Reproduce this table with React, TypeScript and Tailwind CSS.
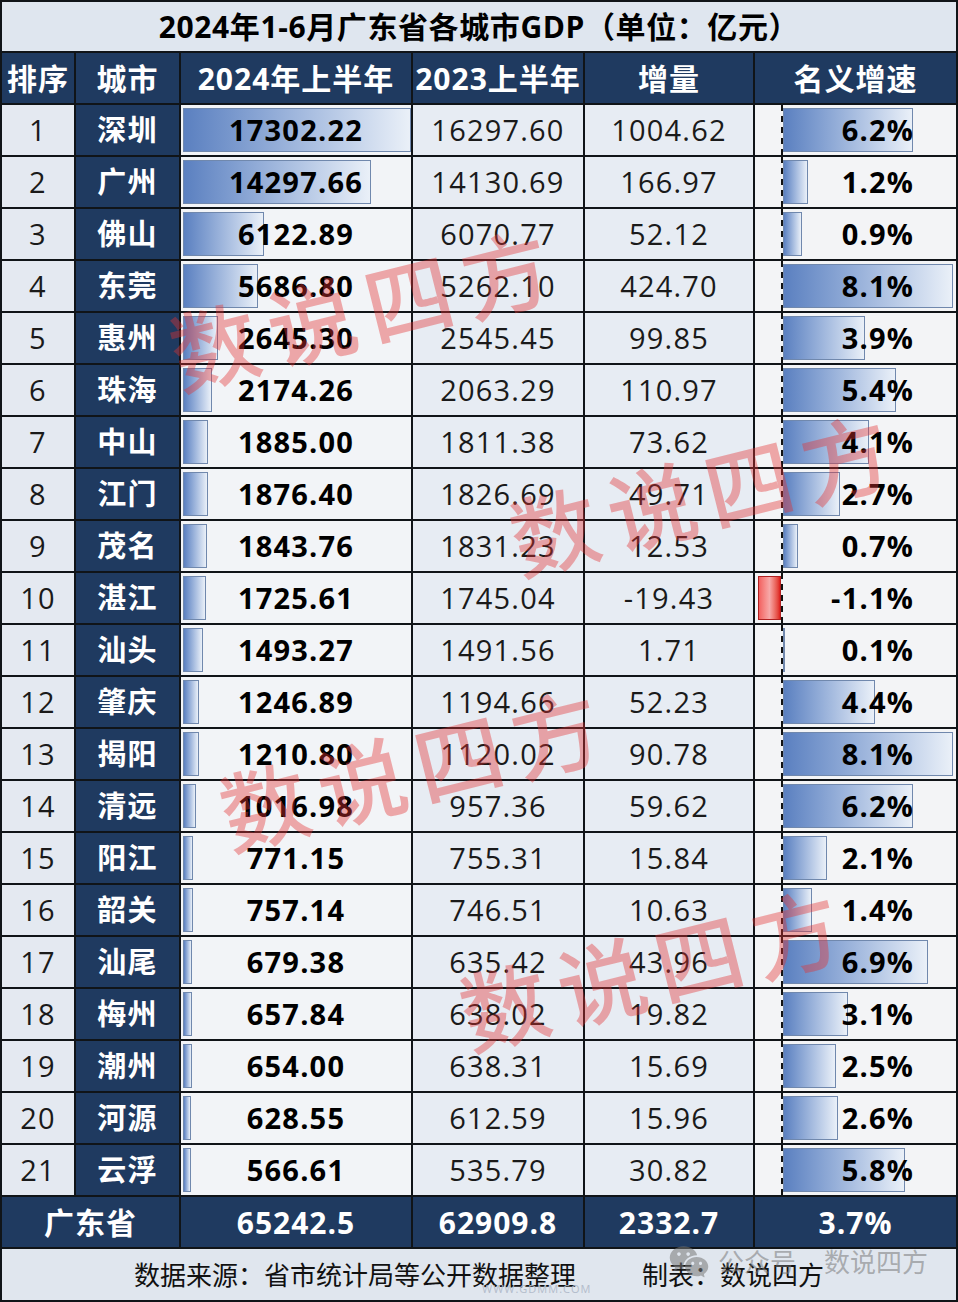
import React from "react";
import { RiWechatFill } from "react-icons/ri";

type Row = [number, string, string, string, string, number];

const data: Row[] = [
  [1, "深圳", "17302.22", "16297.60", "1004.62", 6.2],
  [2, "广州", "14297.66", "14130.69", "166.97", 1.2],
  [3, "佛山", "6122.89", "6070.77", "52.12", 0.9],
  [4, "东莞", "5686.80", "5262.10", "424.70", 8.1],
  [5, "惠州", "2645.30", "2545.45", "99.85", 3.9],
  [6, "珠海", "2174.26", "2063.29", "110.97", 5.4],
  [7, "中山", "1885.00", "1811.38", "73.62", 4.1],
  [8, "江门", "1876.40", "1826.69", "49.71", 2.7],
  [9, "茂名", "1843.76", "1831.23", "12.53", 0.7],
  [10, "湛江", "1725.61", "1745.04", "-19.43", -1.1],
  [11, "汕头", "1493.27", "1491.56", "1.71", 0.1],
  [12, "肇庆", "1246.89", "1194.66", "52.23", 4.4],
  [13, "揭阳", "1210.80", "1120.02", "90.78", 8.1],
  [14, "清远", "1016.98", "957.36", "59.62", 6.2],
  [15, "阳江", "771.15", "755.31", "15.84", 2.1],
  [16, "韶关", "757.14", "746.51", "10.63", 1.4],
  [17, "汕尾", "679.38", "635.42", "43.96", 6.9],
  [18, "梅州", "657.84", "638.02", "19.82", 3.1],
  [19, "潮州", "654.00", "638.31", "15.69", 2.5],
  [20, "河源", "628.55", "612.59", "15.96", 2.6],
  [21, "云浮", "566.61", "535.79", "30.82", 5.8],
];

const font = { fontFamily: '"Open Sans", "Noto Sans CJK SC", sans-serif' };
const grid = "grid grid-cols-[72px_103px_230px_170px_168px_201px] gap-x-[2px]";

function Watermark({ cls }: { cls: string }) {
  return (
    <div
      className={`pointer-events-none absolute -translate-x-1/2 -translate-y-1/2 rotate-[-14deg] whitespace-nowrap text-[88px] font-medium leading-none tracking-[12px] text-[rgba(228,50,50,0.4)] ${cls}`}
      style={{ fontFamily: '"Noto Sans CJK SC", sans-serif' }}
    >
      数说四方
    </div>
  );
}

export default function App() {
  return (
    <div
      className="relative flex h-[1302px] w-[958px] flex-col gap-y-[2px] overflow-hidden bg-[#101418] p-[2px] text-black"
      style={font}
    >
      {/* Title */}
      <div className="flex h-[49px] items-center justify-center bg-[#dfe6ef] text-[30px] font-bold tracking-[0.6px]">
        2024年1-6月广东省各城市GDP（单位：亿元）
      </div>

      {/* Header */}
      <div className={`${grid} h-[50px] text-[30px] font-bold tracking-[1px] text-white`}>
        {["排序", "城市", "2024年上半年", "2023上半年", "增量", "名义增速"].map((h) => (
          <div key={h} className="flex items-center justify-center bg-[#1f3a60]">
            {h}
          </div>
        ))}
      </div>

      {/* Data rows */}
      {data.map(([rank, city, v24, v23, inc, g]) => (
        <div key={rank} className={`${grid} h-[50px] text-[29px] tracking-[1.2px]`}>
          <div className="flex items-center justify-center bg-[#e4e9f1] text-[#1a1a1a]">{rank}</div>
          <div className="flex items-center justify-center bg-[#1f3a60] font-bold text-white">{city}</div>
          <div className="relative flex items-center justify-center bg-[#f2f4f7] font-bold">
            <div
              className="absolute bottom-[3px] left-[2px] top-[3px] border border-[#7088ad] bg-gradient-to-r from-[#5b80c0] to-[#eaf0f8]"
              style={{ width: `${(parseFloat(v24) * 0.01318).toFixed(1)}px` }}
            />
            <span className="relative">{v24}</span>
          </div>
          <div className="flex items-center justify-center bg-[#e7ecf3] text-[#1a1a1a]">{v23}</div>
          <div className="flex items-center justify-center bg-[#e7ecf3] text-[#1a1a1a]">{inc}</div>
          <div className="flex bg-[#f3f4f6]">
            <div className="flex w-[26px] shrink-0 justify-end py-[3px]">
              {g < 0 && (
                <div
                  className="h-full border border-[#b02020] bg-gradient-to-r from-[#f26060] via-[#f6a8a8] to-[#dc1a1a]"
                  style={{ width: `${Math.abs(g) * 21}px` }}
                />
              )}
            </div>
            <div className="relative flex flex-1 items-center justify-end border-l-2 border-dashed border-[#111] pr-[42px] font-bold">
              {g > 0 && (
                <div
                  className="absolute bottom-[3px] left-0 top-[3px] border border-[#7088ad] bg-gradient-to-r from-[#5b80c0] to-[#eaf0f8]"
                  style={{ width: `${g * 21}px` }}
                />
              )}
              <span className="relative">{g.toFixed(1)}%</span>
            </div>
          </div>
        </div>
      ))}

      {/* Total row */}
      <div className={`${grid} h-[50px] text-[30px] font-bold tracking-[1px] text-white`}>
        <div className="col-span-2 flex items-center justify-center bg-[#1f3a60]">广东省</div>
        <div className="flex items-center justify-center bg-[#1f3a60]">65242.5</div>
        <div className="flex items-center justify-center bg-[#1f3a60]">62909.8</div>
        <div className="flex items-center justify-center bg-[#1f3a60]">2332.7</div>
        <div className="flex items-center justify-center bg-[#1f3a60]">3.7%</div>
      </div>

      {/* Footer */}
      <div className="relative flex h-[51px] items-center justify-center gap-x-[66px] bg-[#e0e6ee] pt-[2px] text-[26px] text-[#111]">
        <span>数据来源：省市统计局等公开数据整理</span>
        <span>制表：数说四方</span>
        <div className="pointer-events-none absolute left-[480px] top-[32px] text-[11px] tracking-[1px] text-[#b3bccb]">
          WWW.GDMM.COM
        </div>
        <div className="pointer-events-none absolute left-[666px] top-[-8px] flex items-center gap-x-[8px] text-[26px] text-[rgba(120,120,120,0.55)]">
          <RiWechatFill className="h-[42px] w-[42px]" />
          <span>公众号</span>
          <span className="ml-[20px]">数说四方</span>
        </div>
      </div>

      {/* Watermarks */}
      <Watermark cls="left-[365px] top-[305px]" />
      <Watermark cls="left-[705px] top-[490px]" />
      <Watermark cls="left-[415px] top-[765px]" />
      <Watermark cls="left-[655px] top-[965px]" />
    </div>
  );
}
